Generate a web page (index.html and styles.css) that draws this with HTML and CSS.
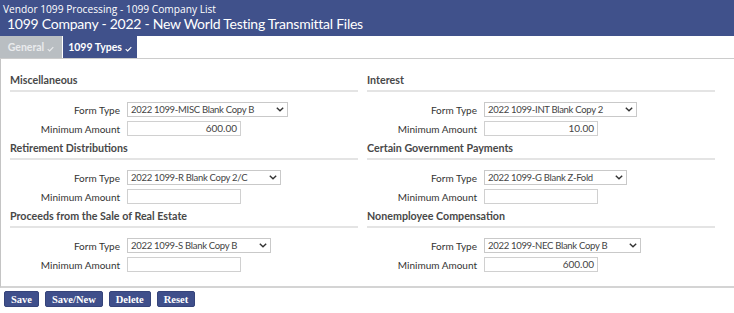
FILE: index.html
```html
<!DOCTYPE html>
<html lang="en">
<head>
<meta charset="utf-8">
<title>1099 Company</title>
<link rel="stylesheet" href="styles.css">
</head>
<body>
<header class="hdr">
  <div class="crumb">Vendor 1099 Processing - 1099 Company List</div>
  <h1 class="title">1099 Company - 2022 - New World Testing Transmittal Files</h1>
</header>
<nav class="tabs">
  <div class="tab tab-off">General <svg class="chk" viewBox="0 0 8 6" width="7" height="6"><path d="M0.8 3.2 L3 5.2 L7.2 0.8" fill="none" stroke="currentColor" stroke-width="1.3"/></svg></div>
  <div class="tab tab-on">1099 Types <svg class="chk" viewBox="0 0 8 6" width="7" height="6"><path d="M0.8 3.2 L3 5.2 L7.2 0.8" fill="none" stroke="currentColor" stroke-width="1.3"/></svg></div>
</nav>
<main class="panel">
  <div class="grid">
    <section class="sec">
      <h2 class="sec-h">Miscellaneous</h2>
      <div class="row"><label class="lbl">Form Type</label><div class="sel"><span class="sel-t">2022 1099-MISC Blank Copy B</span><svg class="chev" viewBox="0 0 8 5" width="8" height="5"><path d="M0.8 0.8 L4 3.8 L7.2 0.8" fill="none" stroke="#333" stroke-width="1.4"/></svg></div></div>
      <div class="row"><label class="lbl">Minimum Amount</label><div class="inp">600.00</div></div>
    </section>
    <section class="sec">
      <h2 class="sec-h">Interest</h2>
      <div class="row"><label class="lbl">Form Type</label><div class="sel"><span class="sel-t">2022 1099-INT Blank Copy 2</span><svg class="chev" viewBox="0 0 8 5" width="8" height="5"><path d="M0.8 0.8 L4 3.8 L7.2 0.8" fill="none" stroke="#333" stroke-width="1.4"/></svg></div></div>
      <div class="row"><label class="lbl">Minimum Amount</label><div class="inp">10.00</div></div>
    </section>
    <section class="sec">
      <h2 class="sec-h">Retirement Distributions</h2>
      <div class="row"><label class="lbl">Form Type</label><div class="sel"><span class="sel-t">2022 1099-R Blank Copy 2/C</span><svg class="chev" viewBox="0 0 8 5" width="8" height="5"><path d="M0.8 0.8 L4 3.8 L7.2 0.8" fill="none" stroke="#333" stroke-width="1.4"/></svg></div></div>
      <div class="row"><label class="lbl">Minimum Amount</label><div class="inp"></div></div>
    </section>
    <section class="sec">
      <h2 class="sec-h">Certain Government Payments</h2>
      <div class="row"><label class="lbl">Form Type</label><div class="sel"><span class="sel-t">2022 1099-G Blank Z-Fold</span><svg class="chev" viewBox="0 0 8 5" width="8" height="5"><path d="M0.8 0.8 L4 3.8 L7.2 0.8" fill="none" stroke="#333" stroke-width="1.4"/></svg></div></div>
      <div class="row"><label class="lbl">Minimum Amount</label><div class="inp"></div></div>
    </section>
    <section class="sec">
      <h2 class="sec-h">Proceeds from the Sale of Real Estate</h2>
      <div class="row"><label class="lbl">Form Type</label><div class="sel"><span class="sel-t">2022 1099-S Blank Copy B</span><svg class="chev" viewBox="0 0 8 5" width="8" height="5"><path d="M0.8 0.8 L4 3.8 L7.2 0.8" fill="none" stroke="#333" stroke-width="1.4"/></svg></div></div>
      <div class="row"><label class="lbl">Minimum Amount</label><div class="inp"></div></div>
    </section>
    <section class="sec">
      <h2 class="sec-h">Nonemployee Compensation</h2>
      <div class="row"><label class="lbl">Form Type</label><div class="sel"><span class="sel-t">2022 1099-NEC Blank Copy B</span><svg class="chev" viewBox="0 0 8 5" width="8" height="5"><path d="M0.8 0.8 L4 3.8 L7.2 0.8" fill="none" stroke="#333" stroke-width="1.4"/></svg></div></div>
      <div class="row"><label class="lbl">Minimum Amount</label><div class="inp">600.00</div></div>
    </section>
  </div>
</main>
<div class="actions">
  <button class="btn">Save</button>
  <button class="btn">Save/New</button>
  <button class="btn">Delete</button>
  <button class="btn">Reset</button>
</div>
</body>
</html>
```

FILE: styles.css
```css
* { box-sizing: border-box; }
html, body { margin: 0; padding: 0; background: #fff; }
body { font-family: Lato, "Open Sans", sans-serif; color: #333; width: 734px; height: 313px; overflow: hidden; }

.hdr { background: #40518b; height: 36px; padding: 3px 0 0 3px; color: #fff; }
.crumb { font-family: "Open Sans", sans-serif; font-size: 10.2px; line-height: 12px; }
.title { margin: 0; padding-left: 4px; font-weight: 400; font-size: 14px; line-height: 18px; letter-spacing: -0.25px; }

.tabs { display: flex; height: 23px; gap: 1px; border-bottom: 1px solid #ccc; }
.tab { display: flex; align-items: center; justify-content: center; gap: 3px; font-size: 10.5px; font-weight: 700; }
.tab-off { width: 62px; background: #b9bec2; color: #e9ebed; }
.tab-on { width: 74px; background: #40518b; color: #fff; }
.chk { margin-top: 3px; }

.panel { border-left: 1px solid #c4c4c4; border-bottom: 2px solid #d4d4d4; padding: 14px 20px 14px 9px; height: 229px; }
.grid { display: grid; grid-template-columns: 348px 348px; column-gap: 9px; }
.sec { height: 68px; }
.sec-h { margin: 0 0 10px; font-size: 10.7px; line-height: 14px; font-weight: 700; color: #484848; padding-bottom: 3px; border-bottom: 2px solid #e4e4e4; }

.row { display: flex; align-items: center; gap: 7px; margin-bottom: 4px; }
.lbl { width: 110px; text-align: right; font-size: 10px; color: #333; }
.sel { display: inline-flex; align-items: center; height: 15px; border: 1px solid #c9c9c9; padding: 0 3px 0 3px; font-size: 9.5px; letter-spacing: -0.3px; color: #444; background: #fff; }
.sel-t { padding-right: 22px; }
.inp { width: 114px; height: 15px; border: 1px solid #d0d0d0; font-size: 10px; line-height: 13px; text-align: right; padding-right: 3px; color: #444; }

.actions { display: flex; gap: 6px; padding: 3px 0 0 4px; }
.btn { font-family: "Liberation Serif", "Times New Roman", serif; font-weight: 700; font-size: 10.5px; color: #fff; background: #3f4f8b; border: 1px solid #36447a; border-radius: 2px; height: 16px; padding: 0 6px; line-height: 13px; }
```
